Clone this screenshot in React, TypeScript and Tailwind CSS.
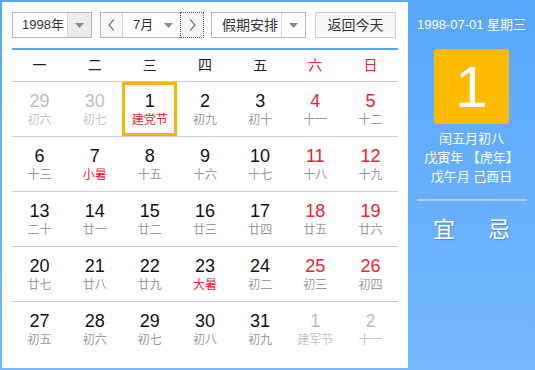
import React from "react";

type Cell = { d: number; l: string; out?: boolean; red?: boolean; lred?: boolean; sel?: boolean };

const rows: Cell[][] = [
  [
    { d: 29, l: "初六", out: true },
    { d: 30, l: "初七", out: true },
    { d: 1, l: "建党节", lred: true, sel: true },
    { d: 2, l: "初九" },
    { d: 3, l: "初十" },
    { d: 4, l: "十一", red: true },
    { d: 5, l: "十二", red: true },
  ],
  [
    { d: 6, l: "十三" },
    { d: 7, l: "小暑", lred: true },
    { d: 8, l: "十五" },
    { d: 9, l: "十六" },
    { d: 10, l: "十七" },
    { d: 11, l: "十八", red: true },
    { d: 12, l: "十九", red: true },
  ],
  [
    { d: 13, l: "二十" },
    { d: 14, l: "廿一" },
    { d: 15, l: "廿二" },
    { d: 16, l: "廿三" },
    { d: 17, l: "廿四" },
    { d: 18, l: "廿五", red: true },
    { d: 19, l: "廿六", red: true },
  ],
  [
    { d: 20, l: "廿七" },
    { d: 21, l: "廿八" },
    { d: 22, l: "廿九" },
    { d: 23, l: "大暑", lred: true },
    { d: 24, l: "初二" },
    { d: 25, l: "初三", red: true },
    { d: 26, l: "初四", red: true },
  ],
  [
    { d: 27, l: "初五" },
    { d: 28, l: "初六" },
    { d: 29, l: "初七" },
    { d: 30, l: "初八" },
    { d: 31, l: "初九" },
    { d: 1, l: "建军节", out: true },
    { d: 2, l: "十一", out: true },
  ],
];

const weekdays = ["一", "二", "三", "四", "五", "六", "日"];

const Caret = () => (
  <svg width="9" height="5" viewBox="0 0 9 5">
    <path d="M0 0h9L4.5 5z" fill="#8a8a8a" />
  </svg>
);

const Chevron = ({ dir }: { dir: "l" | "r" }) => (
  <svg width="7" height="12" viewBox="0 0 7 12">
    <path
      d={dir === "l" ? "M6 0.5L1 6l5 5.5" : "M1 0.5L6 6l-5 5.5"}
      stroke="#555"
      strokeWidth="1.1"
      fill="none"
    />
  </svg>
);

function DayCell({ c }: { c: Cell }) {
  let num = "text-[#111]";
  let lun = "text-[#9a9a9a]";
  if (c.out) {
    num = "text-[#bdbdbd]";
    lun = "text-[#c4c4c4]";
  } else if (c.red) {
    num = "text-[#f0222d]";
  }
  if (c.lred) lun = "text-[#f0222d]";
  return (
    <div
      className={`flex h-[54px] flex-col items-center justify-center ${
        c.sel ? "border-[3px] border-[#f7b400]" : ""
      }`}
    >
      <div className={`text-[18px] leading-[20px] ${num}`}>{c.d}</div>
      <div className={`mt-[1px] text-[12px] leading-[16px] ${lun}`}>{c.l}</div>
    </div>
  );
}

export default function App() {
  return (
    <div
      className="flex h-[370px] w-[535px] bg-gradient-to-b from-[#58a7fb] to-[#74b8fe] pt-[2px] pb-[2px] pl-[2px]"
      style={{ fontFamily: '"Liberation Sans", "Noto Sans CJK SC", sans-serif' }}
    >
      {/* left: calendar */}
      <div className="w-[406px] bg-white px-[10px] pt-[10px]">
        <div className="flex h-[26px] items-stretch text-[13px] text-[#333]">
          <div className="flex w-[80px] border border-[#b5b5b5]">
            <div className="flex flex-1 items-center pl-[9px]">1998年</div>
            <div className="flex w-[24px] items-center justify-center border-l border-[#d6d6d6] bg-[#ededed]">
              <Caret />
            </div>
          </div>
          <div className="ml-[8px] flex w-[104px] border border-[#b5b5b5]">
            <div className="flex w-[22px] items-center justify-center border-r border-[#d0d0d0] bg-[#f7f7f7]">
              <Chevron dir="l" />
            </div>
            <div className="flex flex-1 items-center justify-between pl-[10px] pr-[7px]">
              <span>7月</span>
              <Caret />
            </div>
            <div className="-my-px -mr-px flex w-[24px] items-center justify-center border border-dotted border-[#555] bg-[#f5f5f5]">
              <Chevron dir="r" />
            </div>
          </div>
          <div className="ml-[7px] flex w-[95px] border border-[#b5b5b5]">
            <div className="flex flex-1 items-center pl-[10px] text-[14px]">假期安排</div>
            <div className="flex w-[24px] items-center justify-center border-l border-[#d6d6d6]">
              <Caret />
            </div>
          </div>
          <div className="ml-[9px] flex w-[81px] items-center justify-center border border-[#cfcfcf] bg-[#f7f7f7] text-[14px]">
            返回今天
          </div>
        </div>

        <div className="mt-[10px] border-t-2 border-[#5aa6f5]" />

        <div className="grid h-[32px] grid-cols-7 border-b border-[#cccccc] text-[14px]">
          {weekdays.map((w, i) => (
            <div
              key={w}
              className={`flex items-center justify-center ${i >= 5 ? "text-[#f0222d]" : "text-[#222]"}`}
            >
              {w}
            </div>
          ))}
        </div>

        {rows.map((r, ri) => (
          <div
            key={ri}
            className={`grid grid-cols-7 ${ri < rows.length - 1 ? "border-b border-[#cccccc]" : ""}`}
          >
            {r.map((c, ci) => (
              <DayCell key={ci} c={c} />
            ))}
          </div>
        ))}
      </div>

      {/* right: today info */}
      <div className="flex flex-1 flex-col items-center text-white">
        <div className="mt-[14px] text-[13px] leading-[18px]">1998-07-01 星期三</div>
        <div className="mt-[15px] flex h-[75px] w-[75px] items-center justify-center rounded-[3px] bg-[#ffbb00] text-[58px] font-light leading-none">
          1
        </div>
        <div className="mt-[5px] flex flex-col items-center text-[13px] leading-[19px]">
          <span>闰五月初八</span>
          <span>戊寅年 【虎年】</span>
          <span>戊午月 己酉日</span>
        </div>
        <div className="mt-[13px] h-[2px] w-[110px] bg-[#a9d1fd]" />
        <div className="mt-[12px] flex w-[110px] justify-around text-[22px] [text-shadow:1px_1px_1px_rgba(0,0,0,0.25)]">
          <span>宜</span>
          <span>忌</span>
        </div>
      </div>
    </div>
  );
}
